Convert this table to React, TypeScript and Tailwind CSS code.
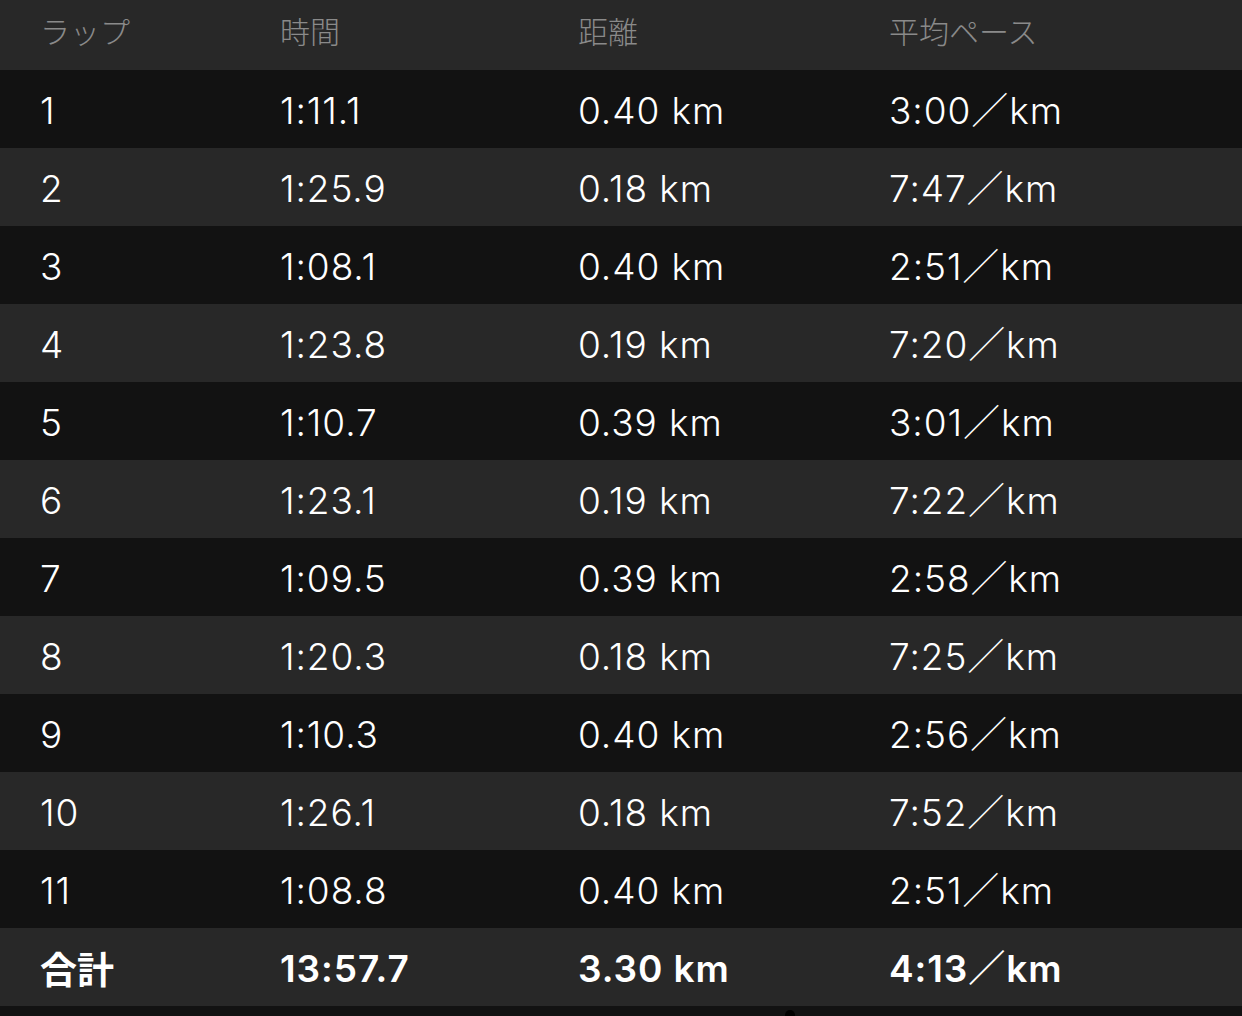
import React from 'react';

type Lap = { lap: string; time: string; dist: string; pace: string };

const laps: Lap[] = [
  { lap: '1', time: '1:11.1', dist: '0.40 km', pace: '3:00／km' },
  { lap: '2', time: '1:25.9', dist: '0.18 km', pace: '7:47／km' },
  { lap: '3', time: '1:08.1', dist: '0.40 km', pace: '2:51／km' },
  { lap: '4', time: '1:23.8', dist: '0.19 km', pace: '7:20／km' },
  { lap: '5', time: '1:10.7', dist: '0.39 km', pace: '3:01／km' },
  { lap: '6', time: '1:23.1', dist: '0.19 km', pace: '7:22／km' },
  { lap: '7', time: '1:09.5', dist: '0.39 km', pace: '2:58／km' },
  { lap: '8', time: '1:20.3', dist: '0.18 km', pace: '7:25／km' },
  { lap: '9', time: '1:10.3', dist: '0.40 km', pace: '2:56／km' },
  { lap: '10', time: '1:26.1', dist: '0.18 km', pace: '7:52／km' },
  { lap: '11', time: '1:08.8', dist: '0.40 km', pace: '2:51／km' },
];

const cols = 'grid grid-cols-[240px_298px_311px_1fr] items-center pl-[40px]';

export default function App() {
  return (
    <div className="w-[1242px] h-[1016px] bg-[#121212] text-white overflow-hidden font-['Inter','Noto_Sans_CJK_JP',sans-serif]">
      {/* header */}
      <div className={`${cols} h-[70px] pb-[10px] bg-[#282828] text-[#8a8a8a] text-[30px] font-['Noto_Sans_CJK_JP',sans-serif] font-light`}>
        <div>ラップ</div>
        <div>時間</div>
        <div>距離</div>
        <div>平均ペース</div>
      </div>

      {laps.map((l, i) => (
        <div
          key={l.lap}
          className={`${cols} h-[78px] pt-[3px] text-[37px] font-light tracking-[0.025em] ${i % 2 === 0 ? 'bg-[#121212]' : 'bg-[#282828]'}`}
        >
          <div>{l.lap}</div>
          <div>{l.time}</div>
          <div>{l.dist}</div>
          <div>{l.pace}</div>
        </div>
      ))}

      {/* total */}
      <div className={`${cols} h-[78px] pt-[3px] text-[37px] font-semibold tracking-[0.025em] bg-[#282828]`}>
        <div className="font-['Noto_Sans_CJK_JP',sans-serif] font-bold tracking-normal">合計</div>
        <div>13:57.7</div>
        <div>3.30 km</div>
        <div>4:13／km</div>
      </div>

      <div className="relative h-[10px]">
        <div className="absolute left-[785px] top-[4px] w-[10px] h-[10px] rounded-full bg-black" />
      </div>
    </div>
  );
}
